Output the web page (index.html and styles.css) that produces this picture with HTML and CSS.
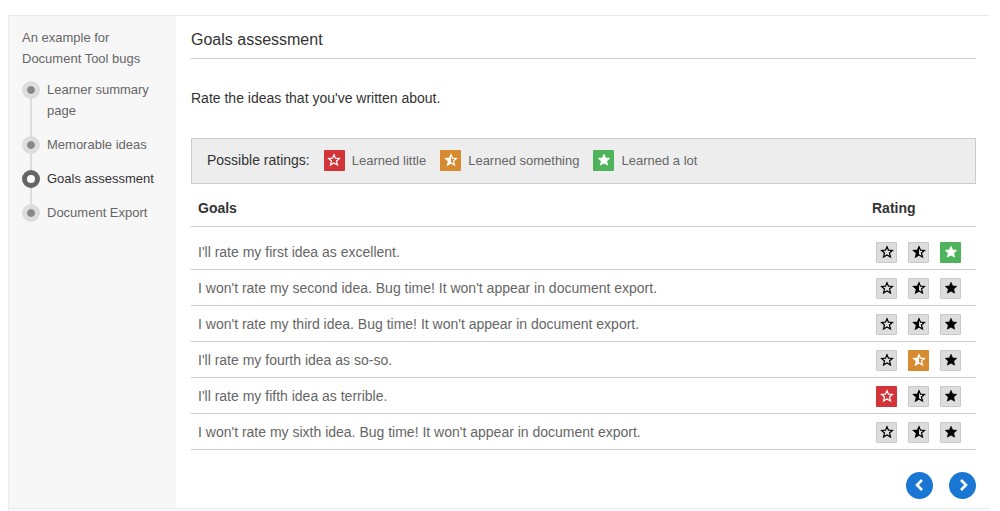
FILE: index.html
```html
<!DOCTYPE html>
<html lang="en">
<head>
<meta charset="utf-8">
<title>Goals assessment</title>
<link rel="stylesheet" href="styles.css">
</head>
<body>
<svg class="defs" aria-hidden="true">
  <symbol id="star-empty" viewBox="0 0 14 14"><path d="M7 1.7 8.5 5.2 12.4 5.5 9.5 8 10.5 12 7 9.9 3.5 12 4.5 8 1.6 5.5 5.5 5.2Z" fill="none" stroke="currentColor" stroke-width="1.2"/></symbol>
  <symbol id="star-half" viewBox="0 0 14 14"><path d="M7 1.7 8.5 5.2 12.4 5.5 9.5 8 10.5 12 7 9.9 3.5 12 4.5 8 1.6 5.5 5.5 5.2Z" fill="none" stroke="currentColor" stroke-width="1.2"/><path d="M7 1.7V9.9L3.5 12 4.5 8 1.6 5.5 5.5 5.2Z" fill="currentColor"/></symbol>
  <symbol id="star-full" viewBox="0 0 14 14"><path d="M7 1.2 8.7 4.9 12.8 5.3 9.8 8.1 10.7 12.2 7 10.2 3.3 12.2 4.2 8.1 1.2 5.3 5.3 4.9Z" fill="currentColor" stroke="currentColor" stroke-width=".6"/></symbol>
</svg>
<div class="frame">
  <div class="tool">
    <nav class="sidebar" aria-label="Document pages">
      <p class="sidebar-title">An example for Document Tool bugs</p>
      <ol class="steps">
        <li class="step"><a href="#summary">Learner summary page</a></li>
        <li class="step"><a href="#ideas">Memorable ideas</a></li>
        <li class="step current"><a href="#goals" aria-current="page">Goals assessment</a></li>
        <li class="step"><a href="#export">Document Export</a></li>
      </ol>
    </nav>
    <main class="main">
      <h1 class="title">Goals assessment</h1>
      <p class="intro">Rate the ideas that you've written about.</p>
      <div class="legend">
        <span class="legend-title">Possible ratings:</span>
        <span class="legend-item"><span class="chip low"><svg class="star"><use href="#star-empty"/></svg></span>Learned little</span>
        <span class="legend-item"><span class="chip mid"><svg class="star"><use href="#star-half"/></svg></span>Learned something</span>
        <span class="legend-item"><span class="chip high"><svg class="star"><use href="#star-full"/></svg></span>Learned a lot</span>
      </div>
      <table class="goals">
        <thead><tr><th>Goals</th><th class="rating-col">Rating</th></tr></thead>
        <tbody id="goal-rows"></tbody>
      </table>
      <div class="pager">
        <button class="page-btn" type="button" aria-label="Previous page"><svg class="chevron" viewBox="0 0 12 14"><path d="M8 2 3 7l5 5"/></svg></button>
        <button class="page-btn" type="button" aria-label="Next page"><svg class="chevron" viewBox="0 0 12 14"><path d="M4 2l5 5-5 5"/></svg></button>
      </div>
    </main>
  </div>
</div>
<script src="script.js"></script>
</body>
</html>
```
FILE: styles.css
```css
*, *::before, *::after { box-sizing: border-box; }
body {
  margin: 0;
  padding: 15px 10px 0 8px;
  background: #fff;
  color: #333;
  font: 14px/21px "Liberation Sans", Arial, sans-serif;
}
.defs { display: none; }
.frame {
  min-height: calc(100vh - 15px);
  padding-bottom: 2px;
  border: solid #ebebeb;
  border-width: 1px 0 0 1px;
  background: #fafafa;
}
.tool { display: flex; border-bottom: 1px solid #ebebeb; background: #fff; }
.sidebar {
  flex: none;
  width: 167px;
  padding: 11px 13px;
  background: #f7f7f7;
  color: #666;
  font-size: 13px;
}
.sidebar-title { margin: 0 0 10px; }
.steps { margin: 0; padding: 0; list-style: none; }
.step { position: relative; padding: 0 0 13px 25px; }
.step a { color: inherit; text-decoration: none; }
.step::before {
  content: "";
  position: absolute;
  z-index: 1;
  top: 2px;
  left: 0;
  width: 18px;
  height: 18px;
  border: 5px solid #ddd;
  border-radius: 50%;
  background: #888;
  background-clip: padding-box;
}
.step:not(:last-child)::after {
  content: "";
  position: absolute;
  top: 11px;
  left: 8px;
  width: 2px;
  height: 100%;
  background: #ddd;
}
.step.current { color: #333; }
.step.current::before { border-color: #666; background-color: #fff; }
.main { flex: 1; min-width: 0; padding: 13px 14px 9px 15px; }
.title {
  margin: 0;
  padding-bottom: 8px;
  border-bottom: 1px solid #ccc;
  font-size: 16px;
  font-weight: 400;
}
.intro { margin: 29px 0; }
.legend {
  display: flex;
  flex-wrap: wrap;
  align-items: center;
  gap: 14px;
  min-height: 46px;
  padding: 0 15px 2px;
  border: 1px solid #ccc;
  background: #ededed;
}
.legend-item { display: flex; align-items: center; gap: 7px; color: #666; font-size: 13px; }
.chip {
  display: grid;
  place-items: center;
  width: 21px;
  height: 21px;
  border-radius: 1px;
  color: #fff;
}
.low { background: #d2343a; }
.mid { background: #d68b30; }
.high { background: #4fb35b; }
.star { width: 14px; height: 14px; }
.goals { width: 100%; border-collapse: separate; border-spacing: 0; }
.goals th { height: 43px; padding: 7px 7px 0; border-bottom: 1px solid #ccc; text-align: left; vertical-align: middle; }
.goals th.rating-col { width: 108px; padding-left: 4px; }
.goals td { height: 36px; padding: 1px 7px 0; border-bottom: 1px solid #ccc; color: #666; }
.goals tbody tr:first-child td { height: 43px; padding-top: 8px; }
.goals td.rating { padding-left: 8px; }
.choices { display: flex; gap: 11px; }
.choice { display: grid; place-items: center; width: 21px; height: 21px; cursor: pointer; color: #000; }
.choice input {
  grid-area: 1 / 1;
  appearance: none;
  width: 21px;
  height: 21px;
  margin: 0;
  border: 1px solid #c8c8c8;
  border-radius: 1px;
}
.choice input:not(:checked) { background: #ddd; }
.choice input:checked { border: 0; }
.choice .star { grid-area: 1 / 1; pointer-events: none; }
.choice input:checked + .star { color: #fff; }
.pager { display: flex; justify-content: flex-end; gap: 16px; margin-top: 22px; }
.page-btn {
  display: grid;
  place-items: center;
  width: 27px;
  height: 27px;
  padding: 0 0 1px;
  border: 0;
  border-radius: 50%;
  background: #1976d2;
  color: #fff;
}
.chevron { width: 12px; height: 14px; fill: none; stroke: currentColor; stroke-width: 2.6; }
```
FILE: script.js
```js
const goals = [
  ["I'll rate my first idea as excellent.", "high"],
  ["I won't rate my second idea. Bug time! It won't appear in document export.", ""],
  ["I won't rate my third idea. Bug time! It won't appear in document export.", ""],
  ["I'll rate my fourth idea as so-so.", "mid"],
  ["I'll rate my fifth idea as terrible.", "low"],
  ["I won't rate my sixth idea. Bug time! It won't appear in document export.", ""]
];
const ratings = [
  ["low", "star-empty", "Learned little"],
  ["mid", "star-half", "Learned something"],
  ["high", "star-full", "Learned a lot"]
];
document.getElementById("goal-rows").innerHTML = goals.map(([text, chosen], i) =>
  `<tr><td>${text}</td><td class="rating"><div class="choices">${ratings.map(([key, icon, label]) =>
    `<label class="choice"><input class="${key}" type="radio" name="goal-${i}" value="${key}" aria-label="${label}"${key === chosen ? " checked" : ""}><svg class="star" aria-hidden="true"><use href="#${icon}"/></svg></label>`
  ).join("")}</div></td></tr>`
).join("");
```
